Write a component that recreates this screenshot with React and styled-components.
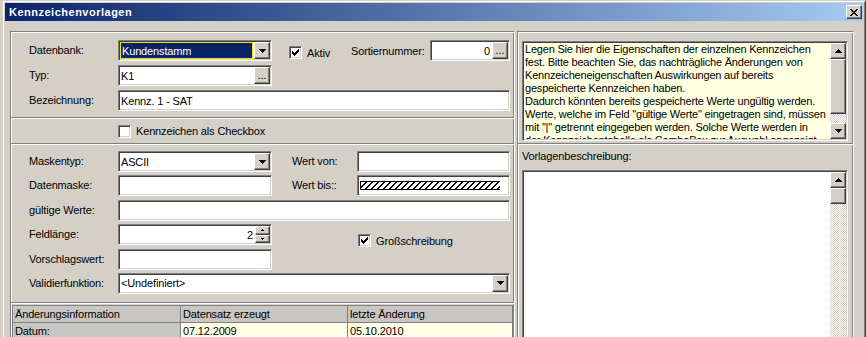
import React from 'react';
import styled, { createGlobalStyle, css } from 'styled-components';

const FACE = '#d4d0c8';

const GlobalStyle = createGlobalStyle`
  html, body { margin: 0; padding: 0; background: ${FACE}; }
  body {
    font-family: "Liberation Sans", Arial, sans-serif;
    font-size: 11px;
    letter-spacing: -0.15px;
    color: #000;
    overflow: hidden;
  }
  #root { width: 866px; height: 337px; overflow: hidden; }
  * { box-sizing: border-box; }
`;

const sunken = css`
  border: 1px solid;
  border-color: #808080 #fff #fff #808080;
  box-shadow: inset 1px 1px #404040, inset -1px -1px ${FACE};
`;

const raised = css`
  border: 1px solid;
  border-color: #fff #404040 #404040 #fff;
  box-shadow: inset -1px -1px #808080, inset 1px 1px ${FACE};
  background: ${FACE};
`;

const etched = css`
  border: 1px solid;
  border-color: #808080 #fff #fff #808080;
  box-shadow: inset 1px 1px #fff, inset -1px -1px #808080;
`;

const rowsPath = (rows) =>
  rows.map(([y, x0, x1]) => `M${x0} ${y}h${x1 - x0}v1h-${x1 - x0}z`).join(' ');

const DOWN = rowsPath([[0, 0, 7], [1, 1, 6], [2, 2, 5], [3, 3, 4]]);
const UP = rowsPath([[0, 3, 4], [1, 2, 5], [2, 1, 6], [3, 0, 7]]);
const TINY_UP = rowsPath([[0, 1, 2], [1, 0, 3]]);
const TINY_DOWN = rowsPath([[0, 0, 3], [1, 1, 2]]);
const CHECK = [2, 3, 4, 3, 2, 1, 0].map((a, c) => `M${c} ${a}h1v3h-1z`).join(' ');
const CLOSE = rowsPath([
  [0, 0, 2], [0, 6, 8],
  [1, 1, 3], [1, 5, 7],
  [2, 2, 6],
  [3, 3, 5],
  [4, 2, 6],
  [5, 1, 3], [5, 5, 7],
  [6, 0, 2], [6, 6, 8],
]);

const Svg = styled.svg`
  display: block;
  flex-shrink: 0;
`;

const Glyph = ({ d, w, h }) => (
  <Svg width={w} height={h} viewBox={`0 0 ${w} ${h}`} shapeRendering="crispEdges">
    <path d={d} fill="#000" />
  </Svg>
);

/* ---------- window chrome ---------- */

const Window = styled.div`
  margin-left: 2px;
  width: 864px;
  height: 430px;
  border: 1px solid;
  border-color: ${FACE} #404040 #404040 ${FACE};
  box-shadow: inset 1px 1px #fff, inset -1px -1px #808080;
  padding: 2px;
  display: flex;
  flex-direction: column;
  background: ${FACE};
`;

const TitleBar = styled.div`
  height: 18px;
  flex-shrink: 0;
  display: flex;
  align-items: center;
  padding: 0 1px 0 2px;
  background: linear-gradient(to right, #0a246a, #a6caf0);
`;

const Title = styled.span`
  color: #fff;
  font-weight: bold;
  font-size: 11px;
  letter-spacing: 0.5px;
  padding-left: 2px;
`;

const CloseButton = styled.div`
  ${raised};
  margin-left: auto;
  width: 16px;
  height: 14px;
  display: flex;
  align-items: center;
  justify-content: center;
`;

const Body = styled.div`
  flex: 1;
  display: flex;
  gap: 2px;
  padding: 10px 9px 0 5px;
  min-height: 0;
`;

const Panel = styled.div`
  ${etched};
  flex-shrink: 0;
  display: flex;
  flex-direction: column;
`;

const LeftPanel = styled(Panel)`
  width: 505px;
`;

const RightPanel = styled(Panel)`
  width: 337px;
`;

const Separator = styled.div`
  height: 2px;
  flex-shrink: 0;
  border-top: 1px solid #808080;
  border-bottom: 1px solid #fff;
`;

/* ---------- form layout ---------- */

const Form = styled.div`
  display: grid;
  grid-template-columns: 89px 154px 18px 67px 153px;
  grid-auto-rows: 21px;
  row-gap: ${(p) => p.$gap}px;
  padding: ${(p) => p.$pad};
`;

const Label = styled.div`
  grid-column: 1;
  align-self: center;
  white-space: nowrap;
  line-height: 13px;
`;

const SideLabel = styled.div`
  grid-column: 4;
  align-self: center;
  white-space: nowrap;
  padding-left: 2px;
  line-height: 13px;
`;

const Field = styled.div`
  ${sunken};
  background: #fff;
  height: 21px;
  display: flex;
  align-items: stretch;
  padding: 1px;
  grid-column: ${(p) => p.$col || 'auto'};
  width: ${(p) => (p.$w ? `${p.$w}px` : 'auto')};
  flex-shrink: 0;
`;

const Value = styled.div`
  flex: 1;
  display: flex;
  align-items: center;
  justify-content: ${(p) => (p.$right ? 'flex-end' : 'flex-start')};
  padding: ${(p) => (p.$right ? '0 2px 0 0' : '0 0 0 1px')};
  white-space: nowrap;
  overflow: hidden;
`;

const Selected = styled.div`
  flex: 1;
  margin-right: 1px;
  display: flex;
  align-items: center;
  padding-left: 1px;
  background: #0a246a;
  color: #fff;
  border: 1px solid #f0e800;
  white-space: nowrap;
`;

const SmallButton = styled.div`
  ${raised};
  width: 16px;
  flex-shrink: 0;
  display: flex;
  align-items: center;
  justify-content: center;
`;

const DotsButton = styled(SmallButton)`
  align-items: flex-end;
  font-size: 11px;
  line-height: 11px;
  padding-bottom: 2px;
  letter-spacing: 0;
`;

const SpinBox = styled.div`
  width: 15px;
  flex-shrink: 0;
  display: flex;
  flex-direction: column;
`;

const SpinButton = styled.div`
  ${raised};
  flex: 1;
  display: flex;
  align-items: center;
  justify-content: center;
`;

const Hatch = styled.div`
  align-self: center;
  width: 140px;
  height: 9px;
  margin-left: 1px;
  border-top: 1px solid #000;
  border-bottom: 1px solid #000;
  border-left: 1px solid #000;
  background: repeating-linear-gradient(135deg, transparent 0 3.1px, #000 3.1px 4.25px);
`;

const Box = styled.div`
  ${sunken};
  background: #fff;
  width: 13px;
  height: 13px;
  flex-shrink: 0;
  display: flex;
  align-items: center;
  justify-content: center;
`;

const CheckItem = styled.div`
  display: flex;
  align-items: center;
  gap: 5px;
  white-space: nowrap;
  flex-shrink: 0;
`;

const Check = ({ checked, children }) => (
  <CheckItem>
    <Box>{checked && <Glyph d={CHECK} w={7} h={7} />}</Box>
    <span>{children}</span>
  </CheckItem>
);

const AktivGroup = styled.div`
  grid-column: 3 / 6;
  display: flex;
  align-items: center;
  padding-left: 17px;
`;

const AktivSlot = styled.div`
  width: 62px;
  flex-shrink: 0;
  margin-top: 4px;
`;

const InlineLabel = styled.div`
  width: 79px;
  flex-shrink: 0;
  white-space: nowrap;
`;

const UpperSlot = styled.div`
  grid-column: 5;
  grid-row: 4 / 6;
  align-self: start;
  margin-top: 10px;
  padding-left: 1px;
`;

const CheckRow = styled.div`
  height: 24px;
  display: flex;
  align-items: center;
  padding-left: 107px;
  flex-shrink: 0;
`;

/* ---------- table ---------- */

const Table = styled.div`
  margin: 1px 1px 0 1px;
  display: grid;
  grid-template-columns: 168px 167px 165px;
  grid-auto-rows: 17px;
  border-left: 1px solid #808080;
  border-top: 1px solid #808080;
`;

const Cell = styled.div`
  border-right: 1px solid #808080;
  border-bottom: 1px solid #808080;
  background: ${(p) => (p.$value ? '#fffee8' : '#c8c6c2')};
  padding-left: 2px;
  line-height: 16px;
  white-space: nowrap;
  overflow: hidden;
`;

/* ---------- right panel ---------- */

const RightTop = styled.div`
  padding: 9px 5px 2px 4px;
`;

const RightBottom = styled.div`
  padding: 5px 5px 0 4px;
  display: flex;
  flex-direction: column;
`;

const Caption = styled.div`
  line-height: 13px;
  margin-bottom: 7px;
`;

const Memo = styled.div`
  ${sunken};
  background: ${(p) => p.$bg};
  height: ${(p) => p.$h}px;
  display: flex;
  padding: 1px;
`;

const MemoText = styled.div`
  flex: 1;
  overflow: hidden;
  padding-left: 1px;
  line-height: 13px;
  letter-spacing: -0.2px;
  white-space: nowrap;
`;

const ScrollBar = styled.div`
  width: 16px;
  flex-shrink: 0;
  display: flex;
  flex-direction: column;
  background: repeating-conic-gradient(#fff 0 25%, ${FACE} 0 50%) 0 0 / 2px 2px;
`;

const ScrollButton = styled.div`
  ${raised};
  height: 16px;
  flex-shrink: 0;
  display: flex;
  align-items: center;
  justify-content: center;
`;

const Thumb = styled.div`
  ${raised};
  height: ${(p) => p.$h}px;
  flex-shrink: 0;
`;

const Track = styled.div`
  flex: 1;
`;

const infoLines = [
  'Legen Sie hier die Eigenschaften der einzelnen Kennzeichen',
  'fest. Bitte beachten Sie, das nachträgliche Änderungen von',
  'Kennzeicheneigenschaften Auswirkungen auf bereits',
  'gespeicherte Kennzeichen haben.',
  'Dadurch könnten bereits gespeicherte Werte ungültig werden.',
  'Werte, welche im Feld "gültige Werte" eingetragen sind, müssen',
  'mit "|" getrennt eingegeben werden. Solche Werte werden in',
  'der Kennzeichentabelle als ComboBox zur Auswahl angezeigt.',
];

const Combo = ({ children, col }) => (
  <Field $col={col}>
    <Value>{children}</Value>
    <SmallButton>
      <Glyph d={DOWN} w={7} h={4} />
    </SmallButton>
  </Field>
);

export default function App() {
  return (
    <>
      <GlobalStyle />
      <Window>
        <TitleBar>
          <Title>Kennzeichenvorlagen</Title>
          <CloseButton>
            <Glyph d={CLOSE} w={8} h={7} />
          </CloseButton>
        </TitleBar>
        <Body>
          <LeftPanel>
            <Form $gap={4} $pad="8px 0 6px 18px">
              <Label>Datenbank:</Label>
              <Field>
                <Selected>Kundenstamm</Selected>
                <SmallButton>
                  <Glyph d={DOWN} w={7} h={4} />
                </SmallButton>
              </Field>
              <AktivGroup>
                <AktivSlot>
                  <Check checked>Aktiv</Check>
                </AktivSlot>
                <InlineLabel>Sortiernummer:</InlineLabel>
                <Field $w={80}>
                  <Value $right>0</Value>
                  <DotsButton>...</DotsButton>
                </Field>
              </AktivGroup>

              <Label>Typ:</Label>
              <Field>
                <Value>K1</Value>
                <DotsButton>...</DotsButton>
              </Field>

              <Label>Bezeichnung:</Label>
              <Field $col="2 / 6">
                <Value>Kennz. 1 - SAT</Value>
              </Field>
            </Form>

            <Separator />
            <CheckRow>
              <Check>Kennzeichen als Checkbox</Check>
            </CheckRow>
            <Separator />

            <Form $gap={3.4} $pad="6px 0 8px 18px">
              <Label>Maskentyp:</Label>
              <Combo>ASCII</Combo>
              <SideLabel>Wert von:</SideLabel>
              <Field $col={5} />

              <Label>Datenmaske:</Label>
              <Field />
              <SideLabel>Wert bis::</SideLabel>
              <Field $col={5}>
                <Hatch />
              </Field>

              <Label>gültige Werte:</Label>
              <Field $col="2 / 6" />

              <Label>Feldlänge:</Label>
              <Field>
                <Value $right>2</Value>
                <SpinBox>
                  <SpinButton>
                    <Glyph d={TINY_UP} w={3} h={2} />
                  </SpinButton>
                  <SpinButton>
                    <Glyph d={TINY_DOWN} w={3} h={2} />
                  </SpinButton>
                </SpinBox>
              </Field>
              <UpperSlot>
                <Check checked>Großschreibung</Check>
              </UpperSlot>

              <Label>Vorschlagswert:</Label>
              <Field />

              <Label>Validierfunktion:</Label>
              <Combo col="2 / 6">&lt;Undefiniert&gt;</Combo>
            </Form>

            <Separator />
            <Table>
              <Cell>Änderungsinformation</Cell>
              <Cell>Datensatz erzeugt</Cell>
              <Cell>letzte Änderung</Cell>
              <Cell>Datum:</Cell>
              <Cell $value>07.12.2009</Cell>
              <Cell $value>05.10.2010</Cell>
            </Table>
          </LeftPanel>

          <RightPanel>
            <RightTop>
              <Memo $bg="#ffffe1" $h={100}>
                <MemoText>
                  {infoLines.map((l) => (
                    <div key={l}>{l}</div>
                  ))}
                </MemoText>
                <ScrollBar>
                  <ScrollButton>
                    <Glyph d={UP} w={7} h={4} />
                  </ScrollButton>
                  <Thumb $h={55} />
                  <Track />
                  <ScrollButton>
                    <Glyph d={DOWN} w={7} h={4} />
                  </ScrollButton>
                </ScrollBar>
              </Memo>
            </RightTop>
            <Separator />
            <RightBottom>
              <Caption>Vorlagenbeschreibung:</Caption>
              <Memo $bg="#fff" $h={220}>
                <MemoText />
                <ScrollBar>
                  <ScrollButton>
                    <Glyph d={UP} w={7} h={4} />
                  </ScrollButton>
                  <Thumb $h={16} />
                  <Track />
                </ScrollBar>
              </Memo>
            </RightBottom>
          </RightPanel>
        </Body>
      </Window>
    </>
  );
}
